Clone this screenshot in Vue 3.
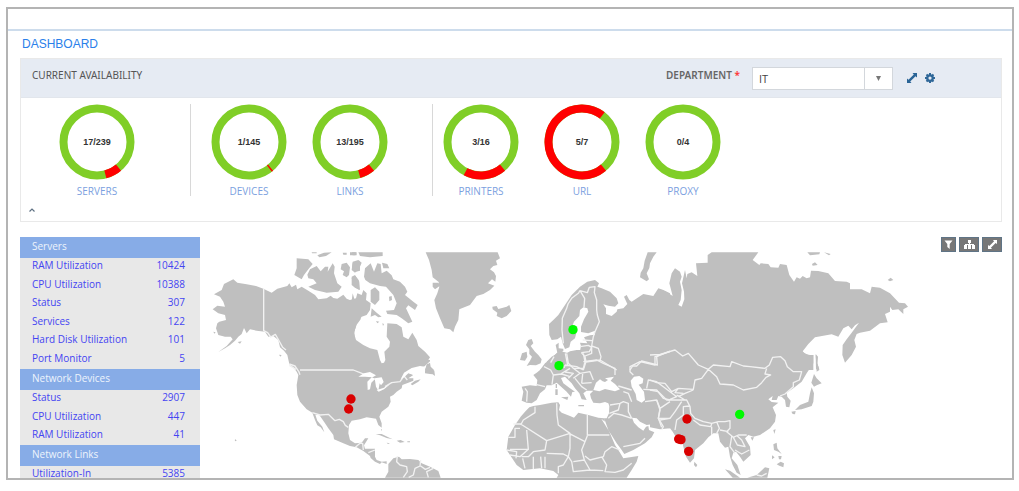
<script setup>
import { ref } from 'vue'

const department = ref('IT')

// Each ring starts its red share at the lower right and runs clockwise.
const gaugeGroups = [
  [{ name: 'SERVERS', down: 17, total: 239 }],
  [
    { name: 'DEVICES', down: 1, total: 145 },
    { name: 'LINKS', down: 13, total: 195 },
  ],
  [
    { name: 'PRINTERS', down: 3, total: 16 },
    { name: 'URL', down: 5, total: 7 },
    { name: 'PROXY', down: 0, total: 4 },
  ],
]
const arc = (g) => `${(g.down / g.total) * 360} 360`

const sections = [
  {
    title: 'Servers',
    rows: [
      ['RAM Utilization', 10424],
      ['CPU Utilization', 10388],
      ['Status', 307],
      ['Services', 122],
      ['Hard Disk Utilization', 101],
      ['Port Monitor', 5],
    ],
  },
  {
    title: 'Network Devices',
    rows: [
      ['Status', 2907],
      ['CPU Utilization', 447],
      ['RAM Utilization', 41],
    ],
  },
  { title: 'Network Links', rows: [['Utilization-In', 5385]] },
]

// Map drawing, split in regions that each have their own origin.
const regions = [
  {
    id: 'alaska', at: 'translate(600 720)',
    land: 'M42,163L65,150 72,132 100,118 112,128 140,133 168,138 190,146 215,158 232,146 262,138 268,130 275,142 288,134 292,148 305,140 325,152 345,165 355,178 380,175 392,167 400,174 412,176 430,164 440,176 455,182 458,160 464,180H482V238L470,254 463,275 464,295 470,308 482,320V390H290L268,372 262,345 252,332 240,322 235,300 220,288 205,290 195,275 170,272 150,268 140,280 132,264 125,282 115,290 105,302 90,315 75,325 55,336 80,318 98,298 92,290 75,290 55,285 48,265 52,250 58,245 78,240 75,225 55,220 38,208 52,197 75,200 70,185 60,170ZM290,55L325,58 338,72 325,88 312,105 305,118 283,105 290,85ZM322,104L330,88 350,78 362,94 375,80 385,80 383,95 398,70 404,80 402,100 412,130 425,140 415,155 380,158 345,150 325,140 350,130 340,118 325,115ZM335,37H350V40H336ZM352,46L372,38 395,37 378,48 358,52ZM425,72L440,68 450,82 447,105 440,112 428,105 432,94 422,88ZM458,68L480,62V92L465,96 456,84ZM455,115L465,107 476,120 480,150 462,140ZM113,306L125,304 120,311ZM237,344L245,345 241,350ZM40,275L47,277 43,281ZM428,38H440V44H430ZM456,37H470V46H458Z',
    lines: 'M191,146V272L203,278 212,291 226,283 236,300 248,322 258,330M268,376L288,388',
  },
  {
    id: 'canada', at: 'translate(1050 720)',
    land: 'M0,180L18,175 22,160 35,165 40,150 50,160 48,180 62,190 60,210 50,225 35,230 20,250 12,280 18,300 40,315 60,325 82,330 90,360 100,370 106,360 103,335 118,320 120,305 110,290 112,250 140,252 155,262 160,290 175,298 187,278 200,300 205,318 225,335 240,352 230,368 200,375 175,385 170,390H0ZM42,110L45,85 62,70 72,95 82,70 92,72 95,100 110,92 125,106 130,118 150,125 165,140 172,155 165,165 190,185 203,195 195,210 175,196 168,205 180,230 187,245 175,250 155,235 140,225 112,222 108,212 132,210 140,190 130,165 108,140 90,138 60,130 46,120ZM8,65L25,60 35,68 28,85 15,98 5,90ZM5,110L15,105 28,125 28,150 15,143 5,135ZM25,37H98V48L60,52 30,48ZM0,37H18L16,46H0ZM96,68L112,72 118,85 100,85ZM62,150L75,142 88,155 88,180 75,195 62,185ZM65,205L80,218 95,230 85,232 75,225 62,230ZM117,170L125,168 126,180 118,184ZM78,243L88,245 82,250ZM97,250L102,252 99,258ZM227,37H443L450,55 438,62 442,75 430,78 420,88 432,97 438,108 436,125 426,118 414,130 433,137 420,150 400,162 380,168 360,195 328,208 325,240 315,260 310,277 300,268 283,265 270,235 258,205 253,180 262,160 268,140 266,126 248,112 245,90 237,60ZM248,128L265,128 270,137 255,148 248,140ZM427,200L440,198 445,207 470,200 478,195 484,213 470,228 455,235 440,228 442,218 428,208ZM230,374L240,368 242,380 252,390H225Z',
    lines: '',
  },
  {
    id: 'america', at: 'translate(600 1080)',
    land: 'M268,0L275,15 290,35 295,45 290,75 292,105 300,125 320,148 337,158 345,180 352,196 362,202 373,217 367,200 352,182 346,164 358,165 372,185 385,205 400,225 402,238 430,250 450,258 470,262 490,273 510,288 512,294 525,305 540,312 545,307 560,312 560,304 545,305 530,300 525,290 525,266 495,266 492,256 505,235 495,235 485,248 465,250 450,240 445,220 447,195 455,182 480,178 500,172 528,176 535,195 545,203 545,190 538,170 545,155 565,140 572,125 570,110 580,105 590,95 605,85 607,75 625,68 640,62 640,55 625,55 640,45 625,38 645,25 672,20 690,4V0ZM632,72L645,62 662,58 655,65 637,76ZM675,32L682,10 690,20 703,32 705,48 698,43 690,42 675,40ZM527,222L545,222 565,232 578,238 560,234 540,226ZM590,242L602,240 614,246 600,248ZM622,244H630V247H622ZM560,248L570,250 564,252ZM104,240L107,238 110,242 106,244ZM546,208V214L543,208ZM555,353L565,335 565,312 580,295 597,290 605,298 630,297 655,300 665,310 690,320 715,333 722,353Z',
    lines: 'M300,30H460L480,38 500,46M268,12L285,18 296,34 300,44M555,80L575,68 600,65 612,48 622,60M337,158L360,165 385,163 405,182 418,178 430,185 436,196 445,202M466,262L480,250 488,250 490,270M505,278L525,270M592,288L590,305 600,315 620,320 622,335 610,352M626,352L640,345 645,325 660,318 662,300M662,318L676,328 690,322M685,352L680,335 700,325',
    water: 'M475,50L492,40 510,36 528,46 518,52 495,50ZM503,90L502,65 515,52 526,56 514,68 510,88ZM524,55L545,52 551,66 543,76 539,70 535,92 528,80ZM530,90L550,84 570,73 552,88 536,95ZM540,0L545,10 552,8 556,0ZM602,58L612,38 635,24 660,18 675,20 655,30 640,38 645,46 625,40 614,50Z',
  },
  {
    id: 'north-europe', at: 'translate(1500 720)',
    land: 'M147,252L160,240 175,225 195,195 215,165 240,140 262,125 285,120 297,130 292,140 305,145 330,155 350,175 355,190 345,200 325,197 310,193 318,205 318,222 335,228 350,215 352,208 370,205 382,192 372,170 380,165 388,180 395,185 430,162 460,168 475,145 490,150 510,160V390H120L145,372 140,365 155,350 165,344 172,338 167,315 176,308 176,325 188,326 187,336 200,338 215,340 240,333 243,318 240,308 262,310 252,292 270,286 285,284 285,272 265,280 243,276 243,260 252,238 265,215 262,205 250,202 240,210 238,228 222,245 218,255 230,275 225,295 212,305 208,322 195,327 188,310 183,290 172,298 155,300 148,285ZM443,37H470L460,50 450,70 448,84 440,100 447,118 440,124 420,112 422,98 430,85 434,62ZM85,300L95,297 100,310 92,318 105,335 115,345 125,358 122,370 108,376 90,375 80,378 90,362 96,350 88,342 88,328 78,315ZM66,340L80,335 82,350 75,362 60,360ZM180,326H190V334H182Z',
    lines: 'M190,310L186,270 187,235 200,205 204,192 215,175 235,160 240,152 254,175 252,202M240,152L262,158 268,142 285,140 283,158 290,180 290,210 292,225 298,245 285,275 280,290 275,318 295,325 303,350 300,362M240,320L265,316 275,322 268,335 244,338M248,300L276,302M196,340L203,375 180,382M244,338L255,350 258,365 250,390M255,348L275,340 275,322M258,366L300,360 320,372 350,390M390,390L398,378 410,378 425,363 472,375 470,350 510,333M152,368L162,350M195,375L230,380 250,390',
  },
  {
    id: 'siberia', at: 'translate(1980 720)',
    land: 'M0,148L20,156 38,168 28,130 35,100 45,85 60,95 65,110 60,125 65,150 62,180 55,195 65,200 73,178 72,155 66,130 75,90 80,115 82,102 95,97 112,108 108,70 143,68 143,45 155,37H295L278,60 298,75 302,70 325,72 332,82 355,83 360,72 380,75 388,105 402,125 410,112 420,116 428,108 440,115 450,112 453,92 475,93 505,100 525,123 560,125 570,130 570,148 605,148 630,160 635,140 660,143 690,160 717,188 735,190 744,200 730,208 730,222 715,208 697,210 690,200 690,215 675,222 683,247 660,250 630,272 600,278 590,282 583,300 588,320 575,345 555,368 547,345 548,315 560,298 575,278 597,248 585,256 575,268 565,257 550,265 535,290 515,283 465,292 445,312 427,335 450,348 460,345V390H0ZM467,345L472,350 472,370 478,388H468ZM442,37H480L478,43 450,46ZM492,37L512,42 507,46ZM456,72L465,67 473,75 458,77ZM683,120L692,113 700,120 690,124Z',
    lines: '',
  },
  {
    id: 'africa', at: 'translate(1470 1050)',
    land: 'M165,40L185,25 200,10 210,2 230,10 240,4 260,0H540V235L510,232 490,222 470,225 450,215 440,205 426,203 432,218 445,232 460,242 468,230 475,228 477,240 493,247 485,262 465,280 430,300 403,312 395,300 380,280 355,240 345,212 342,205 350,205 357,190 358,168 355,160 345,156 330,160 310,158 303,145 300,132 310,122 290,122 280,130 290,150 275,148 268,130 255,115 245,100 225,80 213,84 220,100 240,115 255,125 247,126 243,140 230,125 215,112 200,98 185,106 170,106 165,118 150,130 140,150 125,160 110,158 95,152 100,125 95,110 120,106 140,108 142,90 130,75 140,68 150,60ZM213,142L235,140 232,150ZM196,118H203V135H196ZM197,102H201V114H197ZM265,165H282V169H265ZM92,200L105,185 118,172 130,168 150,165 185,158 205,157 210,165 207,180 215,188 240,198 252,203 265,188 295,195 325,203 342,205 345,215 334,206 358,245 375,285 385,300 400,325 445,318 440,335 425,360 410,383H200L205,375 190,363 150,355 100,360 80,345 60,315 50,300 55,260 75,225Z',
    lines: 'M135,170V188L100,210 92,225M70,222H92L170,272 240,250 205,225 201,195 200,160M292,195V255H358M292,257L285,275 237,250M240,250V295L235,320M110,240L115,298H60M55,262H75V235H90M170,272L165,300 130,305 115,320 95,320M285,275L275,300 283,330 250,335M285,318L300,330 340,320 345,305 365,290 390,300M335,320L350,345 345,365 375,367 400,360 425,340M170,310L220,312 235,320 220,345 205,350V370M98,325L105,355M50,300L80,305 78,325M130,320V358M152,320L155,355M165,320V355M283,330L300,360 340,362M235,320L245,335 250,365 300,360M60,315L90,320 115,298M140,104L165,110M162,50L182,60 190,75 186,104M190,75L215,72 240,80M230,10L235,40 250,55 280,55 285,35 280,10M195,45L225,52M212,72L240,55M225,66L250,70 235,85M250,55L270,70 300,65 310,90M270,70L250,85M280,35L320,30 340,40 375,55 375,75M275,100L305,98M255,85L275,110 290,120M278,72L275,100M105,115L112,125 110,155M355,205L372,190 395,195 425,205M360,165L390,160 400,155 415,160 415,185 425,205M358,190L385,180 390,160M400,125L415,130 425,155M400,290L450,280 465,265M465,155L500,150 510,175 505,205 515,232M430,75L420,65 420,50 450,35 495,45 495,20 540,5M470,115L475,90 500,95 540,125M460,118L500,120 520,145 540,150M385,108L425,120M510,175L540,155M510,210L540,205',
    water: 'M310,120L318,98 330,88 338,94 345,96 354,90 345,85 372,80 362,92 375,102 390,118 375,124 345,117 328,124ZM422,92L432,80 448,78 460,86 458,100 446,104 462,125 465,150 455,158 440,150 437,132 425,110ZM326,168L338,166 334,171Z',
  },
  {
    id: 'asia', at: 'translate(1950 1050)',
    land: 'M0,0H455L465,12 480,15 490,15 490,40 470,70 455,95 430,115 410,128 412,140 422,152 418,172 408,170 405,150 395,140 385,138 380,150 365,150 368,138 355,148 365,156 385,158 368,172 378,195 375,215 360,235 330,255 310,260 295,255 285,265 300,290 302,315 280,335 270,320 258,305 250,308 245,325 262,345 272,375 260,368 248,345 240,320 235,290 225,293 210,275 205,250 190,250 175,262 160,280 135,300 132,325 120,338 108,320 100,290 95,265 78,262 68,245 60,235 30,238 0,232ZM492,72L500,85 515,100 500,106 492,110 484,98ZM485,112L492,130 490,155 485,168 455,178 435,180 450,165 475,155 480,130ZM424,185L437,183 435,193 428,192ZM497,12L504,20 502,40 508,60 500,65ZM370,240L377,238 373,252ZM302,262L312,262 307,272ZM370,283L380,278 382,295 395,312 385,305 372,300ZM366,316L374,322 366,328ZM380,343L392,335 402,340 400,352 388,347ZM385,318L395,318 393,328 387,328ZM133,335L142,345 138,352 132,345ZM225,358L240,362 270,383H248ZM292,383L320,375 345,352 358,355 352,383Z',
    lines: 'M0,15L30,13 75,0 98,18 115,10 145,45 175,58 190,45 240,50 245,35 280,48 300,50 345,55 358,45 368,22 392,20 405,32 412,50 430,65 455,65 448,90 430,98 430,110 405,132 390,138M175,58L200,80 210,102 250,105 280,120 320,112 335,98 348,82 362,75 345,72 350,55M175,58L155,85 135,90 130,118 85,115M0,90L20,98 45,100 65,125 85,115M85,140L105,130 130,120M60,125L80,140 60,148 50,150M80,135L105,150 95,150M85,115L75,128 100,130M95,150L110,150 120,170 122,190 135,205 160,215 185,220 205,215 225,215 240,212 240,235 230,245 250,262 265,255 290,255M0,120L25,125 50,150 95,150M20,150L30,180 25,205 60,205 75,185 95,155M25,205L40,230 35,240M75,240L80,210 100,195 100,170 118,168M130,210L150,225 182,230 185,222M185,230L185,255M200,215L208,235 200,250M235,245L210,240M245,260L240,290 255,310M250,262L262,285 285,290 275,270 262,258M255,300L275,312 298,300M320,375L335,378 350,370',
  },
]

const markers = [
  { x: 1053, y: 1197, state: 'down' },
  { x: 1046, y: 1227, state: 'down' },
  { x: 1719, y: 989, state: 'up' },
  { x: 1677, y: 1097, state: 'up' },
  { x: 2219, y: 1243, state: 'up' },
  { x: 2061, y: 1257, state: 'down' },
  { x: 2036, y: 1317, state: 'down' },
  { x: 2043, y: 1319, state: 'down' },
  { x: 2066, y: 1354, state: 'down' },
]
</script>

<template>
  <div class="page">
    <div class="frame">
      <div class="topbar"></div>
      <main class="content">
        <h1 class="title">DASHBOARD</h1>

        <section class="panel">
          <header class="panel-head">
            <h2 class="panel-title">CURRENT AVAILABILITY</h2>
            <label class="dept-label" for="department">DEPARTMENT <span class="required">*</span></label>
            <div class="dept">
              <select id="department" v-model="department" class="dept-select">
                <option>IT</option>
              </select>
              <span class="dept-arrow" aria-hidden="true">
                <svg width="5" height="5" viewBox="0 0 5 5"><path d="M0,0H5L2.500,5Z" fill="#777" /></svg>
              </span>
            </div>
            <button class="icon-btn" type="button" aria-label="Expand">
              <svg width="10" height="10" viewBox="0 0 10 10">
                <path d="M5.500,0H10V4.500L8.500,3.200 3.200,8.500 4.500,10H0V5.500L1.500,6.800 6.800,1.500Z" fill="#2a6496" />
              </svg>
            </button>
            <button class="icon-btn" type="button" aria-label="Settings">
              <svg width="10" height="10" viewBox="0 0 20 20">
                <g fill="none" stroke="#2f6798">
                  <circle cx="10" cy="10" r="5.500" stroke-width="4.500" />
                  <path d="M10,0V4M10,16V20M0,10H4M16,10H20M3,3L6,6M14,14L17,17M17,3L14,6M6,14L3,17" stroke-width="4" />
                </g>
              </svg>
            </button>
          </header>

          <div class="gauges">
            <div v-for="(group, i) in gaugeGroups" :key="i" class="group">
              <a v-for="g in group" :key="g.name" class="gauge" href="#">
                <svg class="ring" viewBox="0 0 76 76" role="img" :aria-label="g.name">
                  <circle cx="38" cy="38" r="33.500" class="ok" />
                  <circle
                    v-if="g.down"
                    cx="38" cy="38" r="33.500" class="bad"
                    pathLength="360" :stroke-dasharray="arc(g)" transform="rotate(50 38 38)"
                  />
                  <text x="38" y="41" class="ring-text">{{ g.down }}/{{ g.total }}</text>
                </svg>
                <span class="gauge-name">{{ g.name }}</span>
              </a>
            </div>
          </div>

          <button class="collapse" type="button" aria-label="Collapse">
            <svg width="6" height="4" viewBox="0 0 6 4"><path d="M.5,3.500L3,1 5.500,3.500" fill="none" stroke="#5f7183" stroke-width="1.200" /></svg>
          </button>
        </section>

        <section class="lower">
          <div class="stats">
            <table v-for="s in sections" :key="s.title" class="stat-table">
              <thead>
                <tr><th colspan="2" scope="colgroup">{{ s.title }}</th></tr>
              </thead>
              <tbody>
                <tr v-for="r in s.rows" :key="r[0]">
                  <td><a href="#">{{ r[0] }}</a></td>
                  <td class="num"><a href="#">{{ r[1] }}</a></td>
                </tr>
              </tbody>
            </table>
          </div>

          <div class="map-area">
            <svg class="map" viewBox="612 711 2394 726" role="img" aria-label="World map">
              <g v-for="r in regions" :key="r.id" :transform="r.at">
                <path :d="r.land" class="land" />
              </g>
              <g v-for="r in regions" :key="r.id" :transform="r.at">
                <path :d="r.lines" class="border" />
                <path v-if="r.water" :d="r.water" class="water" />
              </g>
              <circle
                v-for="(m, i) in markers" :key="i"
                :cx="m.x" :cy="m.y" r="14" :class="m.state"
              />
            </svg>
            <div class="tools">
              <button class="tool narrow" type="button" aria-label="Filter">
                <svg width="9" height="9" viewBox="0 0 9 9"><path d="M.5,.5H8.500L5.700,4V9L3.300,7V4Z" fill="#fff" /></svg>
              </button>
              <button class="tool" type="button" aria-label="Topology">
                <svg width="11" height="9" viewBox="0 0 11 9">
                  <path d="M4,0H7V3H4ZM0,5H3V9H0ZM4,5H7V9H4ZM8,5H11V9H8ZM5,3H6V5H5ZM1,4H10V6H9V5H2V6H1Z" fill="#fff" />
                </svg>
              </button>
              <button class="tool" type="button" aria-label="Expand map">
                <svg width="9" height="9" viewBox="0 0 10 10">
                  <path d="M5.500,0H10V4.500L8.500,3.200 3.200,8.500 4.500,10H0V5.500L1.500,6.800 6.800,1.500Z" fill="#fff" />
                </svg>
              </button>
            </div>
          </div>
        </section>
      </main>
    </div>
  </div>
</template>

<style>
body {
  background: #fff;
}
</style>

<style scoped>
* {
  box-sizing: border-box;
}
.page {
  height: 100vh;
  padding: 7px 5px 11px 6px;
  font-family: "Open Sans", "Noto Sans", sans-serif;
  font-size: 11px;
}
.frame {
  height: 100%;
  overflow: hidden;
  border: 2px solid #b4b4b4;
  background: #fff;
}
.topbar {
  height: 22px;
  border-bottom: 2px solid #cddcec;
}
.content {
  padding: 4px 10px 0 12px;
}
.title {
  margin: 0;
  padding-left: 2px;
  font: 400 12px/18px "Liberation Sans", Arial, sans-serif;
  color: #2a80ea;
}
.panel {
  margin-top: 5px;
  border: 1px solid #e9e9e9;
}
.panel-head {
  display: flex;
  align-items: flex-start;
  height: 39px;
  padding: 8px 66px 0 11px;
  background: #e6ebf3;
  border-bottom: 1px solid #e2e6ec;
}
.panel-title {
  margin: 0 auto 0 0;
  font-family: "Noto Sans", "Open Sans", sans-serif;
  font-size: 10px;
  font-weight: 400;
  line-height: 16px;
  color: #555;
}
.dept-label {
  margin-right: 12px;
  font-family: "Noto Sans", "Open Sans", sans-serif;
  font-size: 10px;
  font-weight: 600;
  line-height: 16px;
  color: #666;
}
.required {
  color: #f33;
}
.dept {
  position: relative;
  width: 141px;
  margin-right: 14px;
}
.dept-select {
  display: block;
  width: 100%;
  height: 23px;
  padding: 0 6px;
  border: 1px solid #d3d7dc;
  border-radius: 0;
  appearance: none;
  background: #fff;
  color: #444;
  font-family: inherit;
  font-size: 11px;
}
.dept-arrow {
  position: absolute;
  top: 1px;
  right: 1px;
  bottom: 1px;
  display: flex;
  align-items: center;
  justify-content: center;
  width: 28px;
  border-left: 1px solid #d3d7dc;
  pointer-events: none;
}
.icon-btn {
  display: flex;
  align-items: center;
  height: 22px;
  margin-right: 8px;
  padding: 0;
  border: 0;
  background: none;
}
.icon-btn:last-child {
  margin-right: 0;
}
.gauges {
  display: flex;
  padding-top: 6px;
}
.group {
  display: flex;
  gap: 25px;
  height: 92px;
  padding: 0 44px 0 20px;
  border-right: 1px solid #d8d8d8;
}
.group:first-child {
  padding: 0 55px 0 38px;
}
.group:last-child {
  padding: 0 0 0 10px;
  border-right: 0;
}
.gauge {
  display: flex;
  flex-direction: column;
  align-items: center;
  width: 76px;
  color: #7b9fe0;
  text-decoration: none;
}
.ring {
  flex: none;
  width: 76px;
  height: 76px;
}
.ok,
.bad {
  fill: none;
  stroke-width: 8;
}
.ok {
  stroke: #80ce27;
}
.bad {
  stroke: #f00;
}
.ring-text {
  font: 700 9px "Liberation Sans", Arial, sans-serif;
  fill: #333;
  text-anchor: middle;
}
.gauge-name {
  margin-top: 3px;
  font-size: 10px;
  line-height: 16px;
}
.collapse {
  display: block;
  height: 10px;
  margin: 9px 0 6px 8px;
  padding: 0;
  border: 0;
  background: none;
  line-height: 0;
}
.lower {
  display: flex;
  align-items: flex-start;
  gap: 4px;
  margin-top: 15px;
}
.stats {
  flex: none;
  width: 180px;
}
.stat-table {
  width: 100%;
  border-collapse: collapse;
  background: #e8e8e8;
  font-size: 10px;
}
.stat-table th {
  height: 21px;
  padding: 0 12px 2px;
  background: #87ace7;
  color: #eef4fc;
  font-weight: 400;
  line-height: 15px;
  text-align: left;
}
.stat-table td {
  height: 18px;
  padding: 0 0 3px 12px;
  line-height: 15px;
  white-space: nowrap;
}
.stat-table tr:nth-child(even) td {
  height: 19px;
}
.stat-table .num {
  padding: 0 15px 3px 0;
  text-align: right;
}
.stat-table a {
  color: #4444f2;
  text-decoration: none;
}
.map-area {
  position: relative;
  flex: 1;
  min-width: 0;
}
.map {
  display: block;
  width: 100%;
}
.land {
  fill: #bfbfbf;
}
.border {
  fill: none;
  stroke: #f2f2f2;
  stroke-width: 4;
  stroke-linejoin: round;
}
.water {
  fill: #fff;
}
.up {
  fill: #00fa00;
}
.down {
  fill: #d90000;
}
.tools {
  position: absolute;
  top: 0;
  right: 0;
  display: flex;
  gap: 3px;
}
.tool {
  display: flex;
  align-items: center;
  justify-content: center;
  width: 20px;
  height: 15px;
  padding: 0;
  border: 1px solid #5f7486;
  background: #777;
}
.tool.narrow {
  width: 15px;
}
</style>
